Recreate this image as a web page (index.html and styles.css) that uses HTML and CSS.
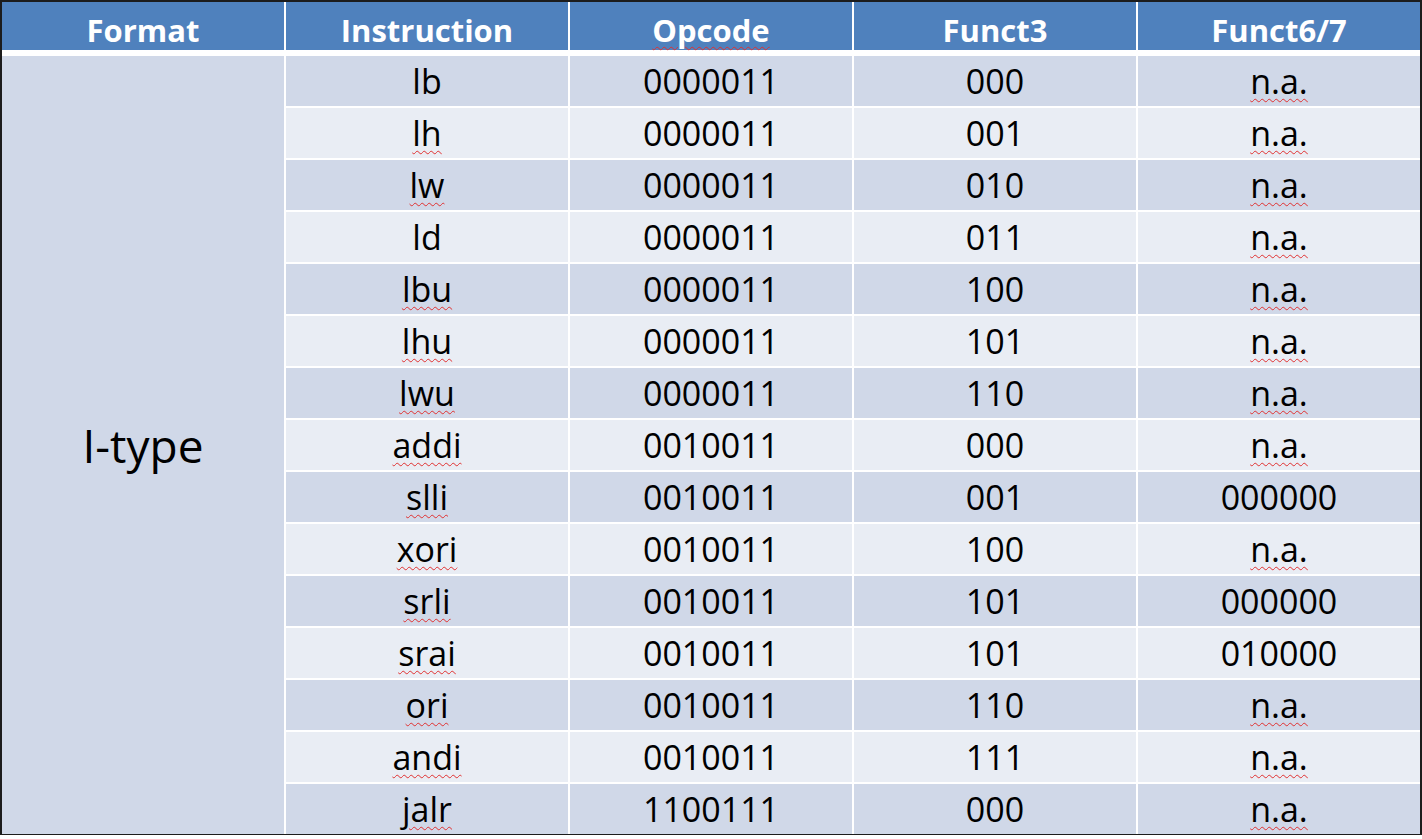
FILE: index.html
```html
<!DOCTYPE html>
<html>
<head>
<meta charset="utf-8">
<link rel="stylesheet" href="styles.css">
</head>
<body>
<div class="frame">
  <div class="table">
    <div class="th">Format</div>
    <div class="th">Instruction</div>
    <div class="th"><span class="sp">Opcode</span></div>
    <div class="th">Funct3</div>
    <div class="th">Funct6/7</div>

    <div class="fmt">I-type</div>

    <div class="td d">lb</div><div class="td d">0000011</div><div class="td d">000</div><div class="td d"><span class="sp">n.a.</span></div>
    <div class="td l"><span class="sp">lh</span></div><div class="td l">0000011</div><div class="td l">001</div><div class="td l"><span class="sp">n.a.</span></div>
    <div class="td d"><span class="sp">lw</span></div><div class="td d">0000011</div><div class="td d">010</div><div class="td d"><span class="sp">n.a.</span></div>
    <div class="td l">ld</div><div class="td l">0000011</div><div class="td l">011</div><div class="td l"><span class="sp">n.a.</span></div>
    <div class="td d"><span class="sp">lbu</span></div><div class="td d">0000011</div><div class="td d">100</div><div class="td d"><span class="sp">n.a.</span></div>
    <div class="td l"><span class="sp">lhu</span></div><div class="td l">0000011</div><div class="td l">101</div><div class="td l"><span class="sp">n.a.</span></div>
    <div class="td d"><span class="sp">lwu</span></div><div class="td d">0000011</div><div class="td d">110</div><div class="td d"><span class="sp">n.a.</span></div>
    <div class="td l"><span class="sp">addi</span></div><div class="td l">0010011</div><div class="td l">000</div><div class="td l"><span class="sp">n.a.</span></div>
    <div class="td d"><span class="sp">slli</span></div><div class="td d">0010011</div><div class="td d">001</div><div class="td d">000000</div>
    <div class="td l"><span class="sp">xori</span></div><div class="td l">0010011</div><div class="td l">100</div><div class="td l"><span class="sp">n.a.</span></div>
    <div class="td d"><span class="sp">srli</span></div><div class="td d">0010011</div><div class="td d">101</div><div class="td d">000000</div>
    <div class="td l"><span class="sp">srai</span></div><div class="td l">0010011</div><div class="td l">101</div><div class="td l">010000</div>
    <div class="td d"><span class="sp">ori</span></div><div class="td d">0010011</div><div class="td d">110</div><div class="td d"><span class="sp">n.a.</span></div>
    <div class="td l"><span class="sp">andi</span></div><div class="td l">0010011</div><div class="td l">111</div><div class="td l"><span class="sp">n.a.</span></div>
    <div class="td d"><span class="sp">jalr</span></div><div class="td d">1100111</div><div class="td d">000</div><div class="td d"><span class="sp">n.a.</span></div>
  </div>
</div>
</body>
</html>
```
FILE: styles.css
```css
html, body {
  margin: 0;
  padding: 0;
  background: #ffffff;
}
body {
  width: 1422px;
  height: 839px;
  overflow: hidden;
  font-family: "Open Sans", "Noto Sans", sans-serif;
}
.frame {
  width: 1418px;
  border-left: 2px solid #1c1c1c;
  border-right: 2px solid #1c1c1c;
  border-top: 2px solid #1c1c1c;
  border-bottom: 1px solid #1c1c1c;
}
.table {
  display: grid;
  grid-template-columns: repeat(5, 282px);
  grid-template-rows: 52px repeat(15, 50px);
  column-gap: 2px;
  row-gap: 2px;
  background: #ffffff;
}
.th {
  align-self: start;
  height: 48px;
  box-sizing: border-box;
  padding-top: 8px;
  background: #4f81bd;
  color: #ffffff;
  font-weight: 700;
  font-size: 31px;
  display: flex;
  align-items: center;
  justify-content: center;
}
.fmt {
  grid-column: 1;
  grid-row: 2 / span 15;
  background: #d0d8e8;
  display: flex;
  align-items: center;
  justify-content: center;
  font-size: 46px;
  color: #000;
}
.td {
  display: flex;
  align-items: center;
  justify-content: center;
  font-size: 34px;
  color: #000;
}
.td.d { background: #d0d8e8; }
.td.l { background: #e9edf4; }
.sp {
  text-decoration: underline wavy #e03030;
  text-decoration-thickness: 1px;
  text-underline-offset: 4px;
}
```
